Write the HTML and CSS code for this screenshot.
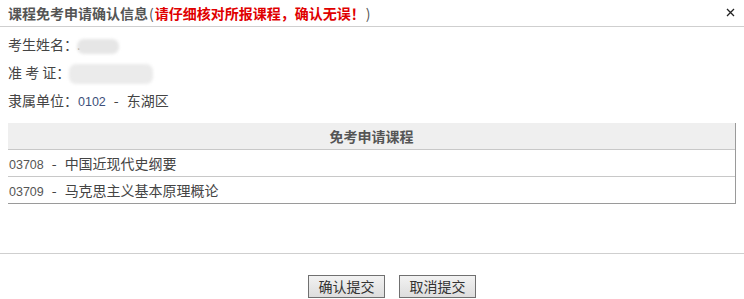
FILE: index.html
```html
<!DOCTYPE html>
<html lang="zh-CN">
<head>
<meta charset="utf-8">
<title>课程免考申请确认信息</title>
<link rel="stylesheet" href="styles.css">
</head>
<body>
<div class="dialog">
  <div class="header">
    <span class="title">课程免考申请确认信息<span class="paren">(</span><span class="warn">请仔细核对所报课程，确认无误！</span><span class="paren">)</span></span>
    <span class="close"><svg width="9" height="9" viewBox="0 0 9 9"><path d="M1 1L8 8M8 1L1 8" stroke="#222" stroke-width="1.3" fill="none"/></svg></span>
  </div>
  <div class="info">
    <div class="row"><span class="label">考生姓名：</span><span class="dot">.</span><span class="blur blur-name"></span></div>
    <div class="row"><span class="label">准&nbsp;考&nbsp;证：</span><span class="blur blur-id"></span></div>
    <div class="row"><span class="label">隶属单位：</span><span class="num">0102</span><span class="dash">-</span>东湖区</div>
  </div>
  <div class="table">
    <div class="thead">免考申请课程</div>
    <div class="trow"><span class="num">03708</span><span class="dash">-</span>中国近现代史纲要</div>
    <div class="trow"><span class="num">03709</span><span class="dash">-</span>马克思主义基本原理概论</div>
  </div>
  <div class="footer">
    <button class="btn">确认提交</button>
    <button class="btn">取消提交</button>
  </div>
</div>
</body>
</html>
```
FILE: styles.css
```css
html, body {
  margin: 0;
  padding: 0;
  background: #fff;
}
body {
  font-family: "Noto Sans CJK SC", "Liberation Sans", sans-serif;
  color: #444;
  font-size: 14px;
}
.dialog {
  width: 744px;
  height: 299px;
  display: flex;
  flex-direction: column;
}
.header {
  height: 26px;
  border-bottom: 1px solid #cfcfcf;
  display: flex;
  align-items: center;
  justify-content: space-between;
  padding: 0 8px 0 8px;
}
.title {
  font-size: 14px;
  font-weight: bold;
  color: #555;
  line-height: 24px;
}
.paren {
  font-weight: normal;
  color: #555;
  margin: 0 1px;
}
.warn {
  color: #e00000;
}
.close {
  display: flex;
  width: 9px;
  height: 9px;
  margin-right: 1px;
  margin-top: -2px;
}
.info {
  padding: 3px 8px 0 8px;
}
.row {
  height: 28px;
  line-height: 28px;
  color: #444;
  white-space: nowrap;
}
.label {
  color: #444;
}
.dot {
  display: inline-block;
  width: 0;
  overflow: visible;
  margin-left: -1px;
}
.blur {
  display: inline-block;
  vertical-align: middle;
  background: #e6e6e6;
  border-radius: 7px;
  filter: blur(1.5px);
}
.blur-name {
  width: 42px;
  height: 15px;
}
.blur-id {
  width: 84px;
  height: 20px;
  margin-left: -1px;
  background: #ebebeb;
}
.num {
  font-family: "Liberation Sans", "DejaVu Sans", sans-serif;
  font-size: 12.5px;
  color: #555;
}
.row .num {
  color: #3d4f7a;
}
.dash {
  margin: 0 8px 0 8px;
  color: #444;
}
.table {
  margin: 9px 8px 0 8px;
  border-right: 1px solid #9a9a9a;
  border-bottom: 1px solid #9a9a9a;
}
.thead {
  height: 26px;
  line-height: 26px;
  background: #efefef;
  text-align: center;
  font-weight: bold;
  color: #555;
  border-bottom: 1px solid #c8c8c8;
}
.trow {
  height: 26px;
  line-height: 26px;
  padding-left: 1px;
  color: #444;
  white-space: nowrap;
}
.trow + .trow {
  border-top: 1px solid #c8c8c8;
}
.footer {
  margin-top: 49px;
  border-top: 1px solid #cfcfcf;
  display: flex;
  justify-content: center;
  gap: 14px;
  padding-top: 21px;
  padding-left: 40px;
}
.btn {
  width: 77px;
  height: 23px;
  padding: 0;
  border: 1px solid #707070;
  background: linear-gradient(#f2f2f2, #dddddd);
  font-family: "Noto Sans CJK SC", sans-serif;
  font-size: 14px;
  color: #333;
  border-radius: 0;
  line-height: 21px;
}
```
